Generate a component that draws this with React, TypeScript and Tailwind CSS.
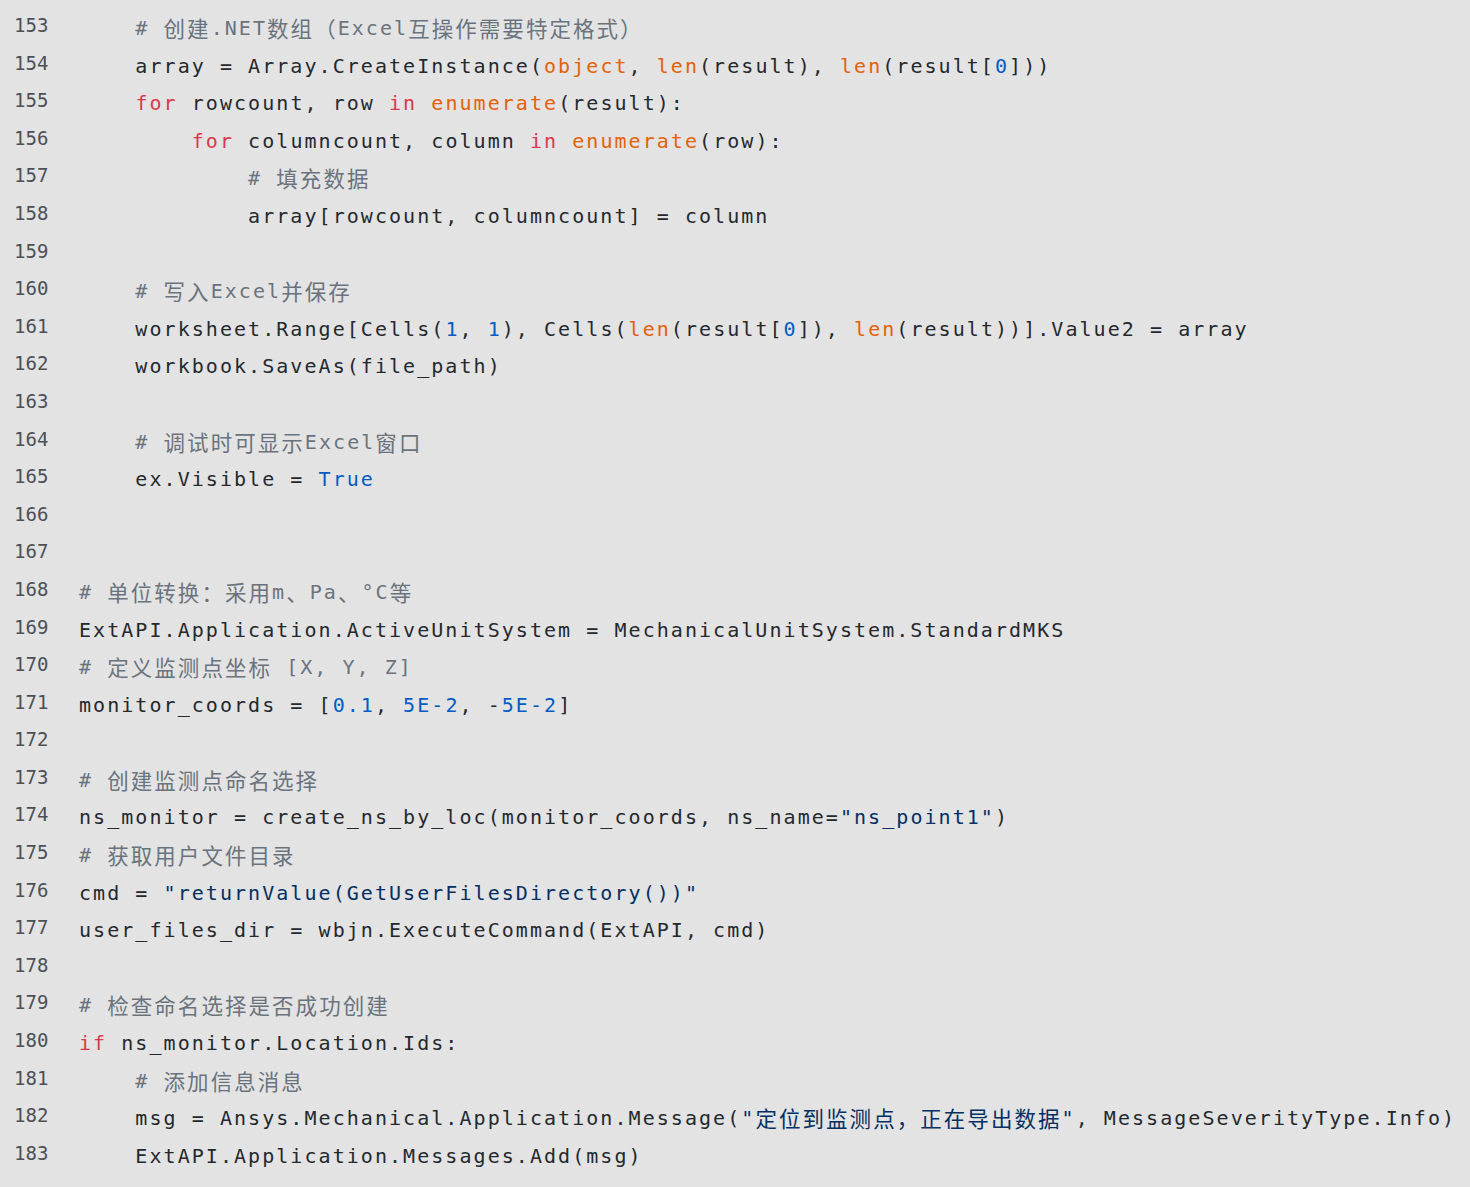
import React from 'react';

type Kind = 't' | 'c' | 'k' | 'b' | 'n' | 's';
type Tok = [Kind, string];

const colors: Record<Kind, string> = {
  t: 'text-[#24292e]',
  c: 'text-[#6a737d]',
  k: 'text-[#d73a49]',
  b: 'text-[#e36209]',
  n: 'text-[#005cc5]',
  s: 'text-[#032f62]',
};

const lines: Tok[][] = [
  [['c', '    # 创建.NET数组（Excel互操作需要特定格式）']],
  [
    ['t', '    array = Array.CreateInstance('],
    ['b', 'object'],
    ['t', ', '],
    ['b', 'len'],
    ['t', '(result), '],
    ['b', 'len'],
    ['t', '(result['],
    ['n', '0'],
    ['t', ']))'],
  ],
  [
    ['t', '    '],
    ['k', 'for'],
    ['t', ' rowcount, row '],
    ['k', 'in'],
    ['t', ' '],
    ['b', 'enumerate'],
    ['t', '(result):'],
  ],
  [
    ['t', '        '],
    ['k', 'for'],
    ['t', ' columncount, column '],
    ['k', 'in'],
    ['t', ' '],
    ['b', 'enumerate'],
    ['t', '(row):'],
  ],
  [['c', '            # 填充数据']],
  [['t', '            array[rowcount, columncount] = column']],
  [],
  [['c', '    # 写入Excel并保存']],
  [
    ['t', '    worksheet.Range[Cells('],
    ['n', '1'],
    ['t', ', '],
    ['n', '1'],
    ['t', '), Cells('],
    ['b', 'len'],
    ['t', '(result['],
    ['n', '0'],
    ['t', ']), '],
    ['b', 'len'],
    ['t', '(result))].Value2 = array'],
  ],
  [['t', '    workbook.SaveAs(file_path)']],
  [],
  [['c', '    # 调试时可显示Excel窗口']],
  [
    ['t', '    ex.Visible = '],
    ['n', 'True'],
  ],
  [],
  [],
  [['c', '# 单位转换：采用m、Pa、°C等']],
  [['t', 'ExtAPI.Application.ActiveUnitSystem = MechanicalUnitSystem.StandardMKS']],
  [['c', '# 定义监测点坐标 [X, Y, Z]']],
  [
    ['t', 'monitor_coords = ['],
    ['n', '0.1'],
    ['t', ', '],
    ['n', '5E-2'],
    ['t', ', -'],
    ['n', '5E-2'],
    ['t', ']'],
  ],
  [],
  [['c', '# 创建监测点命名选择']],
  [
    ['t', 'ns_monitor = create_ns_by_loc(monitor_coords, ns_name='],
    ['s', '"ns_point1"'],
    ['t', ')'],
  ],
  [['c', '# 获取用户文件目录']],
  [
    ['t', 'cmd = '],
    ['s', '"returnValue(GetUserFilesDirectory())"'],
  ],
  [['t', 'user_files_dir = wbjn.ExecuteCommand(ExtAPI, cmd)']],
  [],
  [['c', '# 检查命名选择是否成功创建']],
  [
    ['k', 'if'],
    ['t', ' ns_monitor.Location.Ids:'],
  ],
  [['c', '    # 添加信息消息']],
  [
    ['t', '    msg = Ansys.Mechanical.Application.Message('],
    ['s', '"定位到监测点，正在导出数据"'],
    ['t', ', MessageSeverityType.Info)'],
  ],
  [['t', '    ExtAPI.Application.Messages.Add(msg)']],
];

// CJK runs get a slightly larger size, like the fallback font in the shot
const cjk = /([\u3000-\u303f\u4e00-\u9fff\uff00-\uffef]+)/;

const Segment = ({ text }: { text: string }) => (
  <>
    {text.split(cjk).map((part, i) =>
      i % 2 === 1 ? (
        <span key={i} className="text-[21.5px] align-[-2px]">
          {part}
        </span>
      ) : (
        <React.Fragment key={i}>{part}</React.Fragment>
      )
    )}
  </>
);

const App = () => {
  return (
    <div className="min-h-screen w-full bg-[#e3e3e3] pt-[10px] font-['DejaVu_Sans_Mono','Noto_Sans_CJK_SC',monospace]">
      {lines.map((toks, idx) => (
        <div key={idx} className="flex h-[37.6px]">
          <div className="w-[79px] shrink-0 pl-[14px] text-[19px] leading-[31px] text-[#4c5056]">
            {153 + idx}
          </div>
          <div className="whitespace-pre text-[20px] leading-[37.6px] tracking-[2.05px]">
            {toks.map(([kind, text], i) => (
              <span key={i} className={colors[kind]}>
                <Segment text={text} />
              </span>
            ))}
          </div>
        </div>
      ))}
    </div>
  );
};

export default App;
